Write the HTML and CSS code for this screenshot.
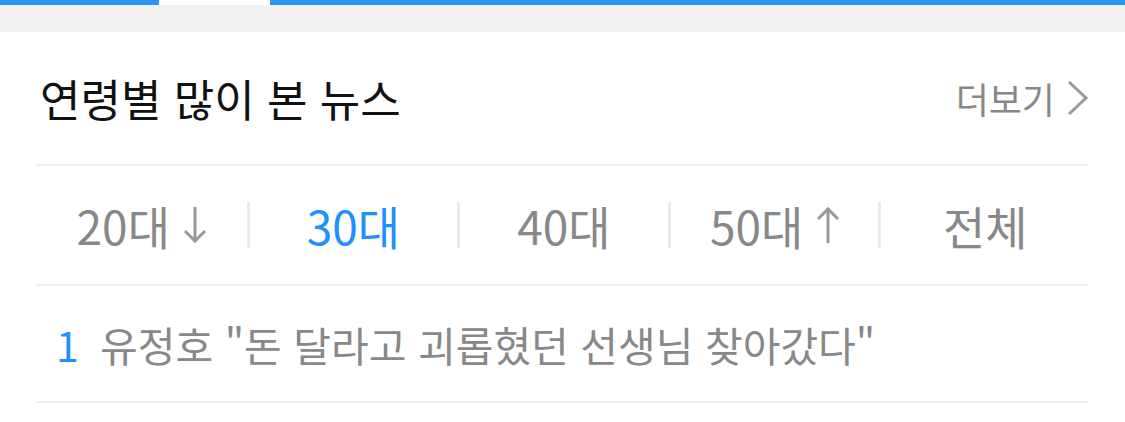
FILE: index.html
```html
<!DOCTYPE html>
<html lang="ko">
<head>
    <meta charset="UTF-8">
    <meta name="viewport" content="width=device-width, initial-scale=1.0">
    <title>연령별 많이 본 뉴스</title>
    <link rel="stylesheet" href="styles.css">
</head>
<body>

    <div class="top-strip">
        <div class="indicator">
            <span class="seg seg-on seg-first"></span>
            <span class="seg seg-off"></span>
            <span class="seg seg-on seg-rest"></span>
        </div>
    </div>

    <section class="ranking">
        <header class="ranking-head">
            <h2 class="ranking-title">연령별 많이 본 뉴스</h2>
            <a class="more-link" href="#">더보기
                <svg class="chevron" width="22" height="36" viewBox="0 0 22 36">
                    <polyline points="2,2 19,18 2,34" fill="none" stroke="#999" stroke-width="3"/>
                </svg>
            </a>
        </header>

        <nav class="age-tabs">
            <a class="age-tab" href="#">20대
                <svg class="arrow" width="22" height="36" viewBox="0 0 22 36">
                    <line x1="11" y1="0" x2="11" y2="35" stroke="#999" stroke-width="3"/>
                    <polyline points="1,24 11,34 21,24" fill="none" stroke="#999" stroke-width="3"/>
                </svg>
            </a>
            <a class="age-tab active" href="#">30대</a>
            <a class="age-tab" href="#">40대</a>
            <a class="age-tab" href="#">50대
                <svg class="arrow" width="22" height="36" viewBox="0 0 22 36">
                    <line x1="11" y1="1" x2="11" y2="36" stroke="#999" stroke-width="3"/>
                    <polyline points="1,12 11,2 21,12" fill="none" stroke="#999" stroke-width="3"/>
                </svg>
            </a>
            <a class="age-tab" href="#">전체</a>
        </nav>

        <ol class="news-list">
            <li class="news-item">
                <span class="rank">1</span>
                <a class="headline" href="#">유정호 "돈 달라고 괴롭혔던 선생님 찾아갔다"</a>
            </li>
        </ol>
    </section>

</body>
</html>
```

FILE: styles.css
```css
/* Base */
:root {
    --accent: #1e90ff;
    --bar-blue: #2b96f4;
    --line: #efefef;
    --muted: #888;
    --title: #111;
}

html, body {
    margin: 0;
    padding: 0;
    background: #fff;
    font-family: "Noto Sans CJK KR", "Noto Sans", sans-serif;
}

a {
    text-decoration: none;
    color: inherit;
}

/* Top strip with page indicator */
.top-strip {
    height: 32px;
    background: #f1f1f1;
}

.indicator {
    display: flex;
    height: 5px;
}

.seg-on {
    background: var(--bar-blue);
}

.seg-off {
    width: 111px;
    background: #fff;
}

.seg-first {
    width: 159px;
}

.seg-rest {
    flex: 1;
}

/* Ranking box */
.ranking {
    padding: 0 36px;
}

.ranking-head {
    display: flex;
    justify-content: space-between;
    align-items: center;
    height: 132px;
    border-bottom: 2px solid var(--line);
}

.ranking-title {
    margin: 0 0 0 4px;
    font-size: 44px;
    font-weight: 400;
    color: var(--title);
}

.more-link {
    display: flex;
    align-items: center;
    gap: 12px;
    font-size: 36px;
    color: var(--muted);
}

/* Age tabs */
.age-tabs {
    display: grid;
    grid-template-columns: repeat(5, 1fr);
    align-items: center;
    height: 118px;
    border-bottom: 2px solid var(--line);
}

.age-tab {
    display: flex;
    justify-content: center;
    align-items: center;
    gap: 14px;
    font-size: 46px;
    color: var(--muted);
    border-left: 3px solid #ebebeb;
    height: 46px;
    line-height: 46px;
}

.age-tab:first-child {
    border-left: none;
}

.age-tab.active {
    color: var(--accent);
}

/* News list */
.news-list {
    margin: 0;
    padding: 0;
    list-style: none;
}

.news-item {
    display: flex;
    align-items: center;
    height: 115px;
    border-bottom: 2px solid var(--line);
    font-size: 41px;
}

.rank {
    width: 64px;
    padding-left: 20px;
    box-sizing: border-box;
    color: var(--accent);
}

.headline {
    color: var(--muted);
}
```
